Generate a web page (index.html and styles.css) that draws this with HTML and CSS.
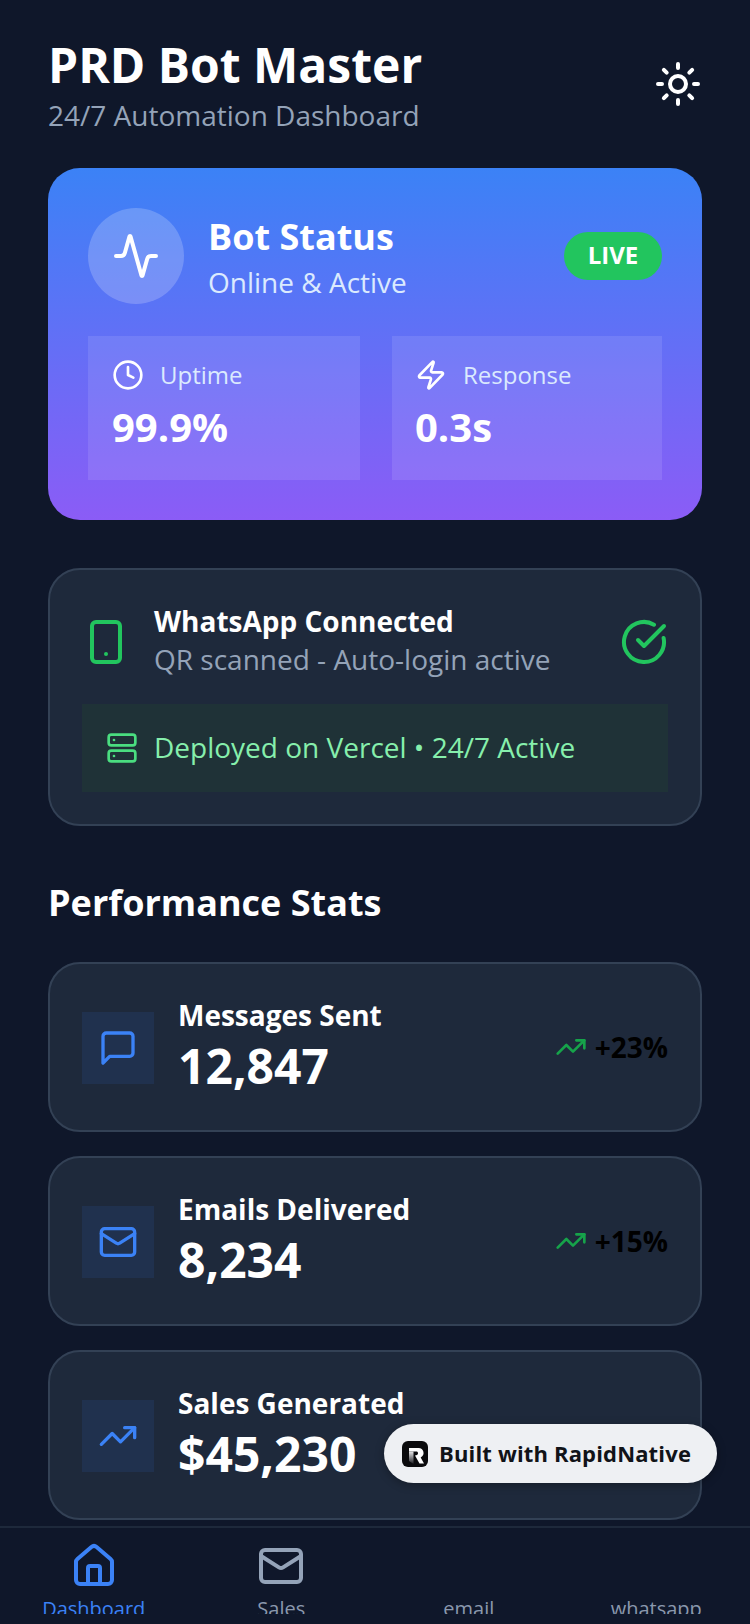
FILE: index.html
```html
<!DOCTYPE html>
<html>
<head>
  <title>PRD Bot Master</title>
  <link rel="stylesheet" href="styles.css">
</head>
<body>
  <div class="app">
    <main class="content">
      <header class="top">
        <div>
          <h1>PRD Bot Master</h1>
          <p class="subtitle">24/7 Automation Dashboard</p>
        </div>
        <svg class="icon sun" viewBox="0 0 24 24"><circle cx="12" cy="12" r="4"/><path d="M12 2v2M12 20v2M4.93 4.93l1.41 1.41M17.66 17.66l1.41 1.41M2 12h2M20 12h2M6.34 17.66l-1.41 1.41M19.07 4.93l-1.41 1.41"/></svg>
      </header>

      <section class="hero">
        <div class="hero-head">
          <div class="pulse">
            <svg class="icon" viewBox="0 0 24 24"><path d="M22 12h-2.48a2 2 0 0 0-1.93 1.46l-2.35 8.36a.25.25 0 0 1-.48 0L9.24 2.18a.25.25 0 0 0-.48 0l-2.35 8.36A2 2 0 0 1 4.49 12H2"/></svg>
          </div>
          <div class="hero-text">
            <h2>Bot Status</h2>
            <p>Online &amp; Active</p>
          </div>
          <span class="live">LIVE</span>
        </div>
        <div class="hero-stats">
          <div class="hero-stat">
            <div class="hero-label">
              <svg class="icon" viewBox="0 0 24 24"><circle cx="12" cy="12" r="10"/><path d="M12 6v6l4 2"/></svg>
              <span>Uptime</span>
            </div>
            <strong>99.9%</strong>
          </div>
          <div class="hero-stat">
            <div class="hero-label">
              <svg class="icon" viewBox="0 0 24 24"><path d="M4 14a1 1 0 0 1-.78-1.63l9.9-10.2a.5.5 0 0 1 .86.46l-1.92 6.02A1 1 0 0 0 13 10h7a1 1 0 0 1 .78 1.63l-9.9 10.2a.5.5 0 0 1-.86-.46l1.92-6.02A1 1 0 0 0 11 14z"/></svg>
              <span>Response</span>
            </div>
            <strong>0.3s</strong>
          </div>
        </div>
      </section>

      <section class="card whatsapp">
        <div class="wa-row">
          <svg class="icon wa-phone" viewBox="0 0 24 24"><rect x="5" y="2" width="14" height="20" rx="2"/><path d="M12 18h.01"/></svg>
          <div class="wa-text">
            <h3>WhatsApp Connected</h3>
            <p>QR scanned - Auto-login active</p>
          </div>
          <svg class="icon wa-check" viewBox="0 0 24 24"><path d="M21.801 10A10 10 0 1 1 17 3.335"/><path d="M9 11l3 3L22 4"/></svg>
        </div>
        <div class="deploy">
          <svg class="icon" viewBox="0 0 24 24"><rect x="2" y="2" width="20" height="8" rx="2"/><rect x="2" y="14" width="20" height="8" rx="2"/><path d="M6 6h.01M6 18h.01"/></svg>
          <span>Deployed on Vercel • 24/7 Active</span>
        </div>
      </section>

      <h2 class="section-title">Performance Stats</h2>

      <section class="card stat">
        <div class="stat-icon">
          <svg class="icon" viewBox="0 0 24 24"><path d="M21 15a2 2 0 0 1-2 2H7l-4 4V5a2 2 0 0 1 2-2h14a2 2 0 0 1 2 2z"/></svg>
        </div>
        <div class="stat-text">
          <h3>Messages Sent</h3>
          <strong>12,847</strong>
        </div>
        <div class="trend">
          <svg class="icon" viewBox="0 0 24 24"><path d="M22 7l-8.5 8.5-5-5L2 17"/><path d="M16 7h6v6"/></svg>
          <span>+23%</span>
        </div>
      </section>

      <section class="card stat">
        <div class="stat-icon">
          <svg class="icon" viewBox="0 0 24 24"><rect x="2" y="4" width="20" height="16" rx="2"/><path d="M22 7l-8.97 5.7a1.94 1.94 0 0 1-2.06 0L2 7"/></svg>
        </div>
        <div class="stat-text">
          <h3>Emails Delivered</h3>
          <strong>8,234</strong>
        </div>
        <div class="trend">
          <svg class="icon" viewBox="0 0 24 24"><path d="M22 7l-8.5 8.5-5-5L2 17"/><path d="M16 7h6v6"/></svg>
          <span>+15%</span>
        </div>
      </section>

      <section class="card stat">
        <div class="stat-icon">
          <svg class="icon" viewBox="0 0 24 24"><path d="M22 7l-8.5 8.5-5-5L2 17"/><path d="M16 7h6v6"/></svg>
        </div>
        <div class="stat-text">
          <h3>Sales Generated</h3>
          <strong>$45,230</strong>
        </div>
      </section>
    </main>

    <nav class="tabs">
      <div class="tab active">
        <svg class="icon" viewBox="0 0 24 24"><path d="M15 21v-8a1 1 0 0 0-1-1h-4a1 1 0 0 0-1 1v8"/><path d="M3 10a2 2 0 0 1 .709-1.528l7-5.999a2 2 0 0 1 2.582 0l7 5.999A2 2 0 0 1 21 10v9a2 2 0 0 1-2 2H5a2 2 0 0 1-2-2z"/></svg>
        <span>Dashboard</span>
      </div>
      <div class="tab">
        <svg class="icon" viewBox="0 0 24 24"><rect x="2" y="4" width="20" height="16" rx="2"/><path d="M22 7l-8.97 5.7a1.94 1.94 0 0 1-2.06 0L2 7"/></svg>
        <span>Sales</span>
      </div>
      <div class="tab">
        <div class="tab-blank"></div>
        <span>email</span>
      </div>
      <div class="tab">
        <div class="tab-blank"></div>
        <span>whatsapp</span>
      </div>
    </nav>

    <div class="built">
      <svg class="built-logo" viewBox="0 0 26 26">
        <defs>
          <linearGradient id="stem" x1="0" y1="0" x2="0" y2="1">
            <stop offset="0" stop-color="#e8e8ea"/>
            <stop offset="1" stop-color="#1c1c20"/>
          </linearGradient>
        </defs>
        <rect width="26" height="26" rx="6" fill="#0b0b0d"/>
        <path d="M7 7h9.500a5 5 0 0 1 2.200 9.500l3.300 6h-4.500l-4.500-8 2-.5a2 2 0 0 0 0-3.500H7z" fill="#fff"/>
        <path d="M7 10.500h4.500V23l-4.500-3z" fill="url(#stem)"/>
      </svg>
      <span>Built with RapidNative</span>
    </div>
  </div>
</body>
</html>
```

FILE: styles.css
```css
* {
  box-sizing: border-box;
}
html, body {
  margin: 0;
  padding: 0;
}
body {
  width: 750px;
  height: 1624px;
  overflow: hidden;
  background: #0f172a;
  font-family: "Open Sans", "Noto Sans", sans-serif;
  color: #fff;
}
h1, h2, h3, p {
  margin: 0;
}
.app {
  position: relative;
  display: flex;
  flex-direction: column;
  height: 1624px;
}
.icon {
  display: block;
  fill: none;
  stroke: currentColor;
  stroke-width: 2;
  stroke-linecap: round;
  stroke-linejoin: round;
  flex: none;
}
.content {
  flex: 1;
  min-height: 0;
  overflow: hidden;
  padding: 31px 48px 0;
}
.top {
  display: flex;
  justify-content: space-between;
  align-items: center;
  margin-bottom: 37px;
}
h1 {
  font-size: 48px;
  line-height: 68px;
  font-weight: 700;
}
.subtitle {
  font-size: 28px;
  line-height: 32px;
  color: #94a3b8;
}
.sun {
  width: 48px;
  height: 48px;
  margin-top: 6px;
}
.hero {
  height: 352px;
  border-radius: 32px;
  padding: 40px;
  background: linear-gradient(180deg, #3b82f6, #8b5cf6);
  margin-bottom: 48px;
}
.hero-head {
  display: flex;
  align-items: center;
  margin-bottom: 32px;
}
.pulse {
  width: 96px;
  height: 96px;
  border-radius: 50%;
  background: rgba(255, 255, 255, 0.2);
  display: flex;
  align-items: center;
  justify-content: center;
  margin-right: 24px;
}
.pulse .icon {
  width: 48px;
  height: 48px;
}
.hero-text {
  flex: 1;
  align-self: flex-start;
  padding-top: 5px;
}
.hero-text h2 {
  font-size: 36px;
  line-height: 48px;
  font-weight: 700;
}
.hero-text p {
  font-size: 28px;
  line-height: 42px;
  color: #dbeafe;
}
.live {
  background: #22c55e;
  border-radius: 24px;
  width: 98px;
  height: 48px;
  padding-bottom: 4px;
  display: flex;
  align-items: center;
  justify-content: center;
  font-size: 24px;
  font-weight: 700;
}
.hero-stats {
  display: flex;
  gap: 32px;
}
.hero-stat {
  flex: 1;
  height: 144px;
  padding: 23px 23px;
  background: rgba(255, 255, 255, 0.1);
}
.hero-stat:first-child {
  flex: 0 0 272px;
  padding: 23px 24px;
}
.hero-label {
  display: flex;
  align-items: center;
  gap: 16px;
  font-size: 24px;
  line-height: 32px;
  color: #dbeafe;
}
.hero-label .icon {
  width: 32px;
  height: 32px;
  color: #fff;
}
.hero-stat strong {
  display: block;
  font-size: 40px;
  line-height: 56px;
  font-weight: 700;
  margin-top: 8px;
}
.card {
  background: #1e293b;
  border: 2px solid #334155;
  border-radius: 32px;
}
.whatsapp {
  height: 258px;
  padding: 32px;
  margin-bottom: 53px;
}
.wa-row {
  display: flex;
  align-items: center;
  height: 102px;
  padding-bottom: 22px;
}
.wa-phone {
  width: 48px;
  height: 48px;
  color: #22c55e;
  margin: 0 24px 0 0;
}
.wa-text {
  flex: 1;
  align-self: flex-start;
}
.wa-text h3 {
  font-size: 28px;
  line-height: 38px;
  font-weight: 700;
}
.wa-text p {
  font-size: 28px;
  line-height: 38px;
  color: #94a3b8;
}
.wa-check {
  width: 48px;
  height: 48px;
  color: #22c55e;
}
.deploy {
  display: flex;
  align-items: center;
  gap: 16px;
  height: 88px;
  padding: 0 24px;
  background: #1f3237;
  color: #86efac;
  font-size: 28px;
}
.deploy span {
  padding-bottom: 2px;
}
.deploy .icon {
  width: 32px;
  height: 32px;
  color: #4ade80;
}
.section-title {
  font-size: 36px;
  line-height: 48px;
  font-weight: 700;
  margin-bottom: 35px;
}
.stat {
  display: flex;
  align-items: center;
  height: 170px;
  padding: 0 32px;
  margin-bottom: 24px;
}
.stat-icon {
  width: 72px;
  height: 72px;
  background: rgba(59, 130, 246, 0.1);
  display: flex;
  align-items: center;
  justify-content: center;
  margin: 2px 24px 0 0;
  color: #3b82f6;
}
.stat-icon .icon {
  width: 40px;
  height: 40px;
}
.stat-text {
  flex: 1;
}
.stat-text h3 {
  font-size: 28px;
  line-height: 37px;
  font-weight: 700;
}
.stat-text strong {
  display: block;
  font-size: 48px;
  line-height: 63px;
  font-weight: 700;
}
.trend {
  display: flex;
  align-items: center;
  gap: 8px;
  font-size: 28px;
  font-weight: 700;
  color: #000;
}
.trend .icon {
  width: 32px;
  height: 32px;
  color: #16a34a;
}
.tabs {
  height: 98px;
  border-top: 2px solid #1e293b;
  display: flex;
  flex: none;
}
.tab {
  width: 187.5px;
  height: 86px;
  overflow: hidden;
  display: flex;
  flex-direction: column;
  align-items: center;
  padding-top: 14px;
  color: #8a98ad;
  font-size: 20px;
  line-height: 28px;
}
.tab .icon {
  color: #94a3b8;
}
.tab .icon, .tab-blank {
  width: 48px;
  height: 48px;
  flex: none;
  margin-bottom: 5px;
}
.tab.active, .tab.active .icon {
  color: #3b82f6;
}
.built {
  position: absolute;
  left: 384px;
  top: 1424px;
  width: 333px;
  height: 59px;
  border-radius: 30px;
  background: #eef0f3;
  box-shadow: 0 2px 10px rgba(0, 0, 0, 0.3);
  display: flex;
  align-items: center;
  padding-left: 18px;
  gap: 11px;
  color: #111318;
  font-size: 22px;
  font-weight: 700;
  letter-spacing: 0.16px;
}
.built span {
  padding-bottom: 2px;
}
.built-logo {
  width: 26px;
  height: 26px;
}
```
